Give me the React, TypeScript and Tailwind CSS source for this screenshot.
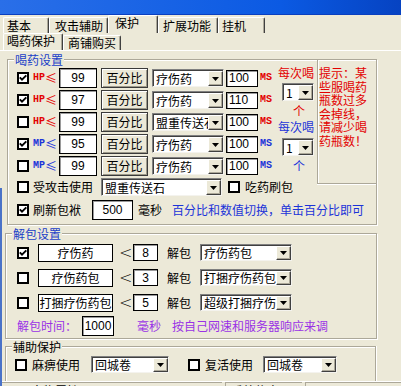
import React from "react";

const CK = ({ on }: { on?: boolean }) => (
  <span className="w-[12px] h-[12px] shrink-0 bg-white border-2 border-black flex items-center justify-center">
    {on && (
      <svg width="8" height="8" viewBox="0 0 8 8">
        <path d="M0.8 3.4 L3 5.7 L7.3 1.3" stroke="#000" strokeWidth="1.9" fill="none" />
      </svg>
    )}
  </span>
);

const DD = () => (
  <span className="w-[15px] h-full shrink-0 bg-[#ece9d8] border border-t-white border-l-white border-r-[#404040] border-b-[#404040] shadow-[inset_-1px_-1px_0_#aca899] flex items-center justify-center">
    <svg width="7" height="4" viewBox="0 0 7 4">
      <path d="M0 0H7L3.5 4Z" fill="#000" />
    </svg>
  </span>
);

const Sel = ({ cls, text }: { cls: string; text: string }) => (
  <div
    className={`flex shrink-0 bg-white border border-t-[#808080] border-l-[#808080] border-r-[#f4f3ee] border-b-[#f4f3ee] shadow-[inset_1px_1px_0_#404040] pt-[1px] pl-[1px] ${cls}`}
  >
    <span className="flex-1 min-w-0 overflow-x-clip whitespace-nowrap leading-[14px] self-center pl-[2px]">
      {text}
    </span>
    <DD />
  </div>
);

const Inp = ({ cls, children }: { cls: string; children: React.ReactNode }) => (
  <div
    className={`shrink-0 bg-white border border-black shadow-[inset_1px_1px_0_#9a9a9a] flex items-center font-['Liberation_Sans',sans-serif] text-[12px] leading-[14px] ${cls}`}
  >
    {children}
  </div>
);

const Btn = ({ cls, children }: { cls: string; children: React.ReactNode }) => (
  <div
    className={`shrink-0 bg-[#ece9d8] border border-[#3a3a3a] shadow-[inset_1px_1px_0_#fff,inset_-1px_-1px_0_#9d9a8a] flex items-center justify-center leading-[14px] ${cls}`}
  >
    {children}
  </div>
);

const Sign = ({ t, color }: { t: string; color: string }) => (
  <span className={`ml-[4px] w-[24px] shrink-0 flex items-center ${color}`}>
    <span className="font-['Liberation_Mono',monospace] font-bold text-[10px] leading-[12px] w-[12px]">{t}</span>
    <span className="w-[12px] text-center leading-[14px]">≤</span>
  </span>
);

const HpRow = ({
  on,
  t,
  v,
  item,
  ms,
  blue,
}: {
  on?: boolean;
  t: string;
  v: string;
  item: string;
  ms: string;
  blue?: boolean;
}) => {
  const color = blue ? "text-[#1c34d8]" : "text-[#e30000]";
  return (
    <div className="flex items-center h-[20px]">
      <CK on={on} />
      <Sign t={t} color={color} />
      <Inp cls="ml-[2px] w-[38px] h-[20px] justify-center">{v}</Inp>
      <Btn cls="ml-[4px] w-[47px] h-[20px]">百分比</Btn>
      <Sel cls="ml-[4px] w-[72px] h-[18px]" text={item} />
      <Inp cls="ml-[2px] w-[32px] h-[17px] pl-[2px]">{ms}</Inp>
      <span
        className={`ml-[2px] font-['Liberation_Mono',monospace] font-bold text-[10px] leading-[12px] ${color}`}
      >
        MS
      </span>
    </div>
  );
};

const Tab = ({
  cls,
  children,
}: {
  cls: string;
  children: React.ReactNode;
}) => (
  <div
    className={`shrink-0 border-l border-t border-white border-r border-r-[#404040] shadow-[inset_-1px_0_0_#aca899] rounded-tl-[2px] rounded-tr-[2px] leading-[14px] ${cls}`}
  >
    {children}
  </div>
);

const UnpackRow = ({ on, label, n, item }: { on?: boolean; label: string; n: string; item: string }) => (
  <div className="flex items-center h-[19px]">
    <CK on={on} />
    <div className="ml-[9px] w-[75px] h-[18px] shrink-0 bg-white border border-black flex items-center justify-center leading-[14px] whitespace-nowrap">
      {label}
    </div>
    <span className="ml-[6px] w-[7px] text-[16px] leading-[16px] font-['DejaVu_Sans',sans-serif] font-extralight">&lt;</span>
    <Inp cls="ml-[7px] w-[25px] h-[17px] justify-center">{n}</Inp>
    <span className="ml-[9px] leading-[14px]">解包</span>
    <Sel cls="ml-[9px] w-[92px] h-[17px]" text={item} />
  </div>
);

export default function App() {
  return (
    <div className="w-[401px] h-[386px] overflow-hidden bg-[#ece9d8] relative font-['Noto_Sans_CJK_SC',sans-serif] text-[12px] leading-[14px] text-black">
      {/* title bar remnant */}
      <div className="h-[15px] bg-[linear-gradient(to_right,#2a6fe8,#0b5ae3_70%,#0643c2)] border-b border-[#0a3fbf]" />

      {/* tab row 1 */}
      <div className="flex items-end h-[18px] pl-[3px]">
        <Tab cls="h-[16px] w-[46px] pl-[3px] pt-[1px]">基本</Tab>
        <Tab cls="h-[16px] w-[59px] pl-[5px] pt-[1px]">攻击辅助</Tab>
        <Tab cls="h-[18px] w-[50px] pl-[6px]">保护</Tab>
        <Tab cls="h-[16px] w-[60px] pl-[4px] pt-[1px]">扩展功能</Tab>
        <Tab cls="h-[16px] w-[47px] pl-[3px] pt-[1px]">挂机</Tab>
      </div>
      {/* tab row 2 */}
      <div className="flex items-end h-[17px] pl-[3px]">
        <Tab cls="h-[17px] w-[60px] pl-[3px]">喝药保护</Tab>
        <Tab cls="h-[15px] w-[58px] pl-[4px]">商铺购买</Tab>
      </div>

      {/* page */}
      <div className="border-t border-white">
        {/* group 1 */}
        <div className="relative mt-[8px] ml-[7px] w-[370px] border border-[#aca899] shadow-[inset_1px_1px_0_#fff,1px_1px_0_#fff] pb-[4px]">
          <span className="absolute -top-[7px] left-[6px] px-[1px] bg-[#ece9d8] text-[#1a3fc8] leading-[14px]">
            喝药设置
          </span>
          <div className="grid grid-cols-[270px_39px_59px]">
            <div className="flex flex-col gap-[2px] pt-[8px] pl-[9px]">
              <HpRow on t="HP" v="99" item="疗伤药" ms="100" />
              <HpRow on t="HP" v="97" item="疗伤药" ms="110" />
              <HpRow t="HP" v="99" item="盟重传送石" ms="100" />
              <HpRow on t="MP" v="95" item="疗伤药" ms="100" blue />
              <HpRow t="MP" v="99" item="疗伤药" ms="100" blue />
            </div>
            <div className="flex flex-col items-start">
              <span className="mt-[6px] text-[#e30000] whitespace-nowrap">每次喝</span>
              <Sel cls="mt-[3px] ml-[4px] w-[32px] h-[18px]" text="1" />
              <span className="mt-[3px] ml-[15px] text-[#e30000]">个</span>
              <span className="mt-[2px] text-[#1c34d8] whitespace-nowrap">每次喝</span>
              <Sel cls="mt-[4px] ml-[4px] w-[32px] h-[18px]" text="1" />
              <span className="mt-[3px] ml-[15px] text-[#1c34d8]">个</span>
            </div>
            <div className="row-span-2 h-[124px] border-l border-b border-[#aca899] shadow-[inset_1px_0_0_#fff,0_1px_0_#fff] pl-[1px] pt-[6px] text-[#e30000] flex flex-col">
              <span className="h-[13.5px] leading-[14px] whitespace-nowrap">提示：某</span>
              <span className="h-[13.5px] leading-[14px] whitespace-nowrap">些服喝药</span>
              <span className="h-[13.5px] leading-[14px] whitespace-nowrap">瓶数过多</span>
              <span className="h-[13.5px] leading-[14px] whitespace-nowrap">会掉线，</span>
              <span className="h-[13.5px] leading-[14px] whitespace-nowrap">请减少喝</span>
              <span className="h-[13.5px] leading-[14px] whitespace-nowrap">药瓶数！</span>
            </div>
            <div className="col-span-2 flex items-center h-[18px] mt-[2px] pl-[9px]">
              <CK />
              <span className="ml-[4px] leading-[14px]">受攻击使用</span>
              <Sel cls="ml-[8px] w-[121px] h-[18px]" text="盟重传送石" />
              <span className="ml-[6px]">
                <CK />
              </span>
              <span className="ml-[5px] leading-[14px]">吃药刷包</span>
            </div>
          </div>
          <div className="flex items-center h-[20px] mt-[4px] pl-[9px]">
            <CK on />
            <span className="ml-[4px]">刷新包袱</span>
            <Inp cls="ml-[11px] w-[41px] h-[20px] justify-center">500</Inp>
            <span className="ml-[5px]">毫秒</span>
            <span className="ml-[10px] text-[#1c34d8] whitespace-nowrap">百分比和数值切换，单击百分比即可</span>
          </div>
        </div>

        {/* group 2 */}
        <div className="relative mt-[8px] ml-[5px] w-[372px] border border-[#aca899] shadow-[inset_1px_1px_0_#fff,1px_1px_0_#fff] pt-[9px] pb-[2px] pl-[11px]">
          <span className="absolute -top-[7px] left-[6px] px-[1px] bg-[#ece9d8] text-[#1a3fc8] leading-[14px]">
            解包设置
          </span>
          <div className="flex flex-col gap-[6px]">
            <UnpackRow on label="疗伤药" n="8" item="疗伤药包" />
            <UnpackRow label="疗伤药包" n="3" item="打捆疗伤药包" />
            <UnpackRow label="打捆疗伤药包" n="5" item="超级打捆疗伤药包" />
          </div>
          <div className="flex items-center h-[20px] mt-[4px] text-[#9a32e6]">
            <span className="whitespace-nowrap">解包时间：</span>
            <Inp cls="ml-[5px] w-[32px] h-[20px] justify-center text-black">1000</Inp>
            <span className="ml-[23px]">毫秒</span>
            <span className="ml-[11px] whitespace-nowrap">按自己网速和服务器响应来调</span>
          </div>
        </div>

        {/* group 3 */}
        <div className="relative mt-[7px] ml-[5px] w-[371px] h-[35px] border border-b-0 border-[#aca899] shadow-[inset_1px_1px_0_#fff,1px_0_0_#fff] pl-[9px] pt-[9px]">
          <span className="absolute -top-[7px] left-[6px] px-[1px] bg-[#ece9d8] leading-[14px]">辅助保护</span>
          <div className="flex items-center h-[17px]">
            <CK />
            <span className="ml-[5px]">麻痹使用</span>
            <Sel cls="ml-[11px] w-[78px] h-[17px]" text="回城卷" />
            <span className="ml-[19px]">
              <CK />
            </span>
            <span className="ml-[5px]">复活使用</span>
            <Sel cls="ml-[10px] w-[74px] h-[17px]" text="回城卷" />
          </div>
        </div>

        {/* bottom strip (cut off) */}
        <div className="flex h-[10px] border-t border-white">
          <div className="w-[222px] border-t border-l border-[#aca899] pl-[30px] pt-[1px] leading-[14px] overflow-hidden">
            人物属性
          </div>
          <div className="ml-[3px] w-[77px] border-t border-l border-[#aca899] pl-[5px] pt-[1px] leading-[14px] overflow-hidden">
            系统信息
          </div>
          <div className="ml-[3px] flex-1 border-t border-l border-[#aca899]" />
        </div>
      </div>

      {/* left window edge */}
      <div className="absolute left-0 top-[188px] bottom-0 w-[2px] bg-[#4a72c8]" />
    </div>
  );
}
